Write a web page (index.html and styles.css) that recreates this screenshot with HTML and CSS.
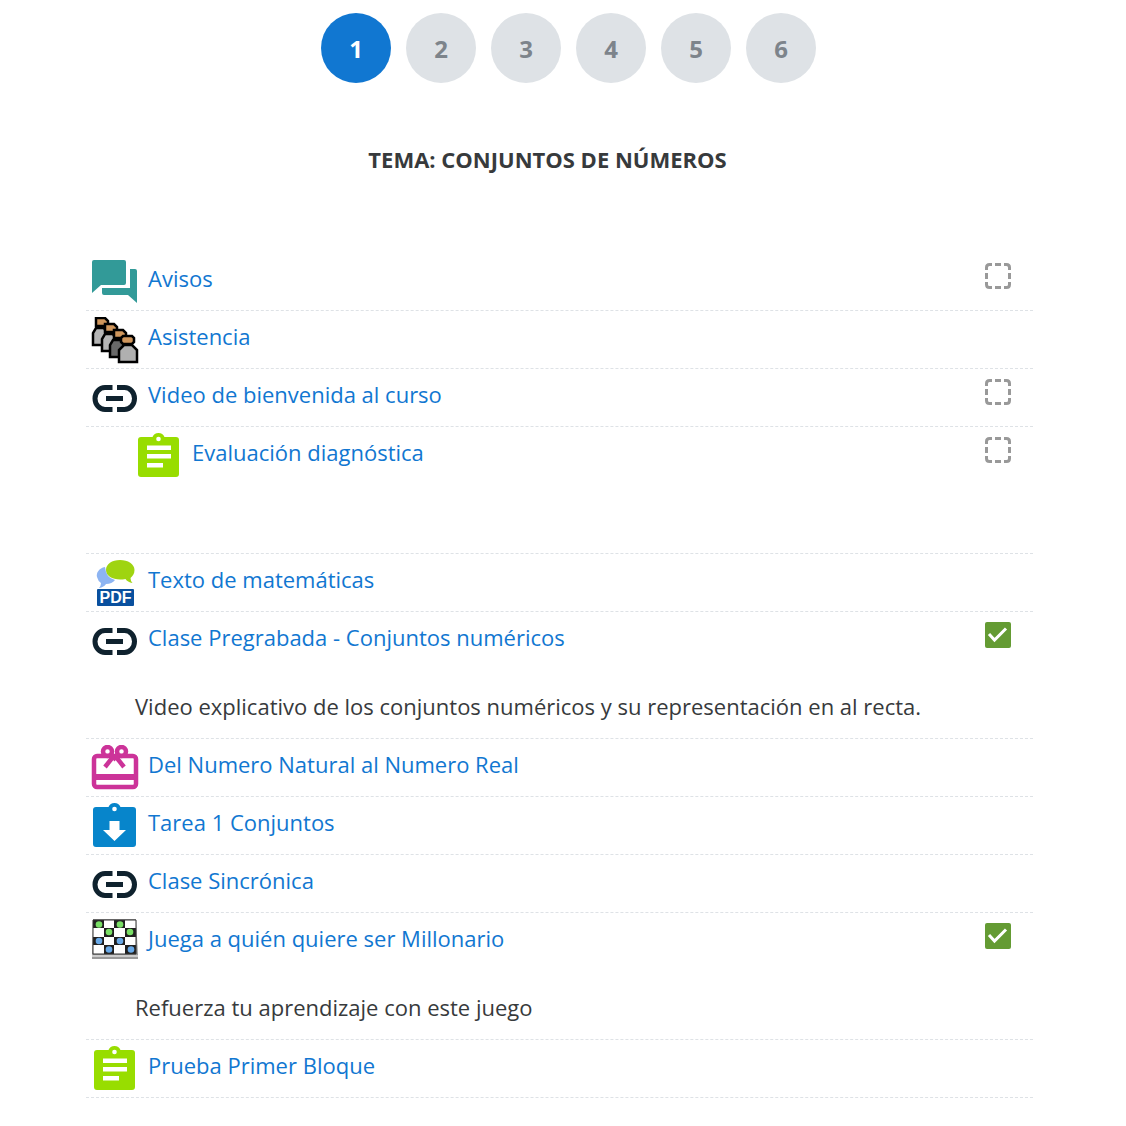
FILE: index.html
```html
<!DOCTYPE html>
<html lang="es">
<head>
<meta charset="utf-8">
<meta name="viewport" content="width=device-width, initial-scale=1">
<title>Conjuntos de números</title>
<link rel="stylesheet" href="styles.css">
</head>
<body>
<svg class="sprite" aria-hidden="true">
  <symbol id="link" viewBox="0 0 48 48">
    <path d="M21.500 12.500H14a10 11 0 0 0 0 22h7.500M26 12.500h7.500a10 11 0 0 1 0 22H26" fill="none" stroke="#0f222e" stroke-width="5"/>
    <path d="M15 21h17v5H15z" fill="#0f222e"/>
  </symbol>
  <symbol id="clipboard" viewBox="0 0 48 48">
    <path d="M6 4h11.500a6.500 6.500 0 0 1 12 0H41q3 0 3 3v34q0 3-3 3H6q-3 0-3-3V7q0-3 3-3z" fill="#98dd00"/>
    <circle cx="23.500" cy="6" r="2.300" fill="#fff"/>
    <path d="M12 12.500h24V17H12zM12 21h24v4.500H12zM12 30h16v4.500H12z" fill="#fff"/>
  </symbol>
  <symbol id="check" viewBox="0 0 28 28">
    <rect x="1" y="1" width="26" height="26" rx="2" fill="#649b33"/>
    <path d="M5 13l5.500 6L22 7.500" fill="none" stroke="#fff" stroke-width="3"/>
  </symbol>
  <symbol id="empty" viewBox="0 0 28 28">
    <path d="M2.500 8V5.500q0-3 3-3H8M11 2.500h6M20 2.500h2.500q3 0 3 3V8M25.500 11v6M25.500 20v2.500q0 3-3 3H20M17 25.500h-6M8 25.500H5.500q-3 0-3-3V20M2.500 17v-6" fill="none" stroke="#999" stroke-width="3"/>
  </symbol>
</svg>

<nav class="sections" aria-label="Secciones">
  <a class="section current" href="#1" aria-current="page">1</a>
  <a class="section" href="#2">2</a>
  <a class="section" href="#3">3</a>
  <a class="section" href="#4">4</a>
  <a class="section" href="#5">5</a>
  <a class="section" href="#6">6</a>
</nav>

<main>
  <h1 class="topic">TEMA: CONJUNTOS DE NÚMEROS</h1>
  <ul class="activities">
    <li class="activity">
      <svg class="icon" viewBox="0 0 48 48" aria-hidden="true"><path d="M1 3q0-2 2-2h30q2 0 2 2v21q0 2-2 2H10l-9 8zM39 10h5q2 0 2 2v32l-9-8H13q-2 0-2-2v-5h28z" fill="#329a98"/></svg>
      <a class="name" href="#avisos">Avisos</a>
      <label class="done"><input type="checkbox" aria-label="Avisos completado"><svg viewBox="0 0 28 28"><use href="#empty"/></svg></label>
    </li>
    <li class="activity">
      <svg class="icon" viewBox="0 0 48 48" aria-hidden="true">
        <g stroke="#000" stroke-width="2.500">
          <path d="M2 28V16l3-5h8l3 5v12z" fill="#b5b5b5"/><path d="M5 1h9l3 3v4l-3 1H5z" fill="#cf965c"/>
          <path d="M11 34V22l3-5h8l3 5v12z" fill="#b5b5b5"/><path d="M14 7h9l3 3v4l-3 1h-9z" fill="#cf965c"/>
          <path d="M19 40V28l3-5h8l3 5v12z" fill="#686868"/><path d="M23 13h9l3 3v4l-3 1h-9z" fill="#cf965c"/>
          <path d="M28 45V33l5-5h8l5 5v12z" fill="#b0b0b0"/><path d="M32 19h9l2 2v4l-2 2h-9l-2-2v-4z" fill="#cf965c"/>
        </g>
      </svg>
      <a class="name" href="#asistencia">Asistencia</a>
    </li>
    <li class="activity">
      <svg class="icon" aria-hidden="true"><use href="#link"/></svg>
      <a class="name" href="#bienvenida">Video de bienvenida al curso</a>
      <label class="done"><input type="checkbox" aria-label="Video de bienvenida completado"><svg viewBox="0 0 28 28"><use href="#empty"/></svg></label>
    </li>
    <li class="activity tall indented">
      <svg class="icon" aria-hidden="true"><use href="#clipboard"/></svg>
      <a class="name" href="#diagnostica">Evaluación diagnóstica</a>
      <label class="done"><input type="checkbox" aria-label="Evaluación diagnóstica completada"><svg viewBox="0 0 28 28"><use href="#empty"/></svg></label>
    </li>
    <li class="activity">
      <svg class="icon" viewBox="0 0 48 48" aria-hidden="true">
        <path d="M14 7C8 8 5 13 6 17q1 4 4 6 0 3-2 5 5-1 7-4 6 0 9-4Q15 18 14 7z" fill="#8db4f2"/>
        <path d="M29 0c8 0 14.500 4 14.500 10 0 4-2 6-4 8q0 3 2 5-5-1-7-4C24 21 15 17 15 10 15 4 21 0 29 0z" fill="#9fd411"/>
        <rect x="6" y="29" width="37" height="17" rx="1" fill="#09509e"/>
        <text class="pdf" x="24.500" y="43" text-anchor="middle">PDF</text>
      </svg>
      <a class="name" href="#texto">Texto de matemáticas</a>
    </li>
    <li class="activity tall">
      <svg class="icon" aria-hidden="true"><use href="#link"/></svg>
      <a class="name" href="#pregrabada">Clase Pregrabada - Conjuntos numéricos</a>
      <label class="done"><input type="checkbox" checked aria-label="Clase Pregrabada completada"><svg viewBox="0 0 28 28"><use href="#check"/></svg></label>
      <p class="description">Video explicativo de los conjuntos numéricos y su representación en al recta.</p>
    </li>
    <li class="activity">
      <svg class="icon" viewBox="0 0 48 48" aria-hidden="true">
        <g fill="none" stroke="#cc3399" stroke-width="4.500">
          <rect x="3" y="11" width="42" height="31" rx="3"/>
          <circle cx="16.500" cy="6.500" r="4.500"/><circle cx="30.500" cy="6.500" r="4.500"/>
          <path d="M20 9l3.500 4L27 9M23.500 10L14 22M23.500 10L33 22"/>
        </g>
        <path d="M3 29h42v6H3zM18 9h11l-2 6h-7z" fill="#cc3399"/>
      </svg>
      <a class="name" href="#natural">Del Numero Natural al Numero Real</a>
    </li>
    <li class="activity">
      <svg class="icon" viewBox="0 0 48 48" aria-hidden="true">
        <path d="M5 4h12.500a6.500 6.500 0 0 1 12 0H42q3 0 3 3v34q0 3-3 3H5q-3 0-3-3V7q0-3 3-3z" fill="#0785cb"/>
        <circle cx="23.500" cy="6" r="2.300" fill="#fff"/>
        <path d="M18.500 18h10v9H35L23.500 38 12 27h6.500z" fill="#fff"/>
      </svg>
      <a class="name" href="#tarea">Tarea 1 Conjuntos</a>
    </li>
    <li class="activity">
      <svg class="icon" aria-hidden="true"><use href="#link"/></svg>
      <a class="name" href="#sincronica">Clase Sincrónica</a>
    </li>
    <li class="activity tall">
      <svg class="icon" viewBox="0 0 48 48" aria-hidden="true">
        <path d="M2 0h43l2 36v4H1v-4z" fill="#999"/><path d="M1 36h46v2H1z" fill="#ccc"/>
        <path d="M2 1h43v34H2z" fill="#fff"/>
        <path d="M2 1h11v8H2zM23 1h11v8H23zM13 9h10v9H13zM34 9h11v9H34zM2 18h11v8H2zM23 18h11v8H23zM13 26h10v9H13zM34 26h11v9H34z" fill="#202020"/>
        <path d="M2 1h43v34H2z" fill="none" stroke="#333"/>
        <g fill="#79df65"><circle cx="8" cy="5.500" r="3.300"/><circle cx="29" cy="5.500" r="3.300"/><circle cx="18" cy="13" r="3.300"/><circle cx="39" cy="13" r="3.300"/></g>
        <g fill="#68a9e8"><circle cx="8" cy="22" r="3.300"/><circle cx="29" cy="22" r="3.300"/><circle cx="18" cy="30.500" r="3.300"/><circle cx="40" cy="30.500" r="3.300"/></g>
      </svg>
      <a class="name" href="#juego">Juega a quién quiere ser Millonario</a>
      <label class="done"><input type="checkbox" checked aria-label="Juego completado"><svg viewBox="0 0 28 28"><use href="#check"/></svg></label>
      <p class="description">Refuerza tu aprendizaje con este juego</p>
    </li>
    <li class="activity">
      <svg class="icon" aria-hidden="true"><use href="#clipboard"/></svg>
      <a class="name" href="#prueba">Prueba Primer Bloque</a>
    </li>
  </ul>
</main>
</body>
</html>
```
FILE: styles.css
```css
* { box-sizing: border-box; }

body {
  margin: 0;
  background: #fff;
  color: #373a3c;
  font-family: "Open Sans", "Noto Sans", sans-serif;
  font-size: 22px;
  line-height: 32px;
}

a { text-decoration: none; }

.sprite {
  display: block;
  width: 0;
  height: 0;
}

.sections {
  display: flex;
  justify-content: center;
  gap: 15px;
  padding: 13px 0 0 11px;
}

.section {
  display: flex;
  align-items: center;
  justify-content: center;
  width: 70px;
  height: 70px;
  padding-top: 2px;
  border-radius: 50%;
  background: #dee2e6;
  color: #7d848b;
  font-weight: 700;
  font-size: 24px;
}

.section.current {
  background: #1177d1;
  color: #fff;
}

.topic {
  margin: 60px 31px 78px 0;
  text-align: center;
  font-size: 22px;
  font-weight: 700;
  line-height: 32px;
}

.activities {
  margin: 0 93px 29px 86px;
  padding: 0;
  list-style: none;
}

.activity {
  display: grid;
  grid-template-columns: 48px 1fr 28px;
  grid-template-rows: 57px auto;
  column-gap: 9px;
  min-height: 58px;
  padding: 0 21px 0 5px;
  border-bottom: 1px dashed #dee2e6;
}

.activity.tall { min-height: 127px; }

.activity.indented { padding-left: 49px; }

.icon {
  width: 48px;
  height: 48px;
  margin-top: 6px;
}

.name {
  justify-self: start;
  padding-top: 9px;
  color: #1177d1;
  white-space: nowrap;
}

.done {
  display: grid;
  width: 28px;
  height: 28px;
  margin-top: 9px;
}

.done > * {
  grid-area: 1 / 1;
  width: 28px;
  height: 28px;
  margin: 0;
}

.done input { appearance: none; }

.done svg { pointer-events: none; }

.description {
  grid-column: 1 / -1;
  grid-row: 2;
  margin: 21px 0 16px 44px;
}

.pdf {
  fill: #fff;
  font: 700 16px "Liberation Sans", sans-serif;
}
```
